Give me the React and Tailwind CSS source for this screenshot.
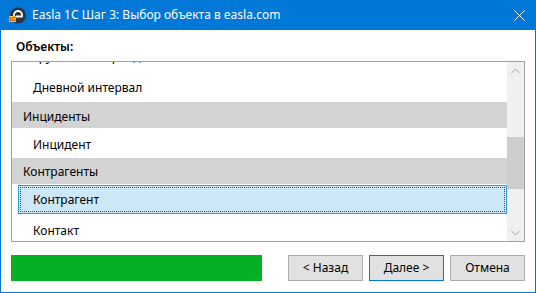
export default function App() {
  const font = "font-['Segoe_UI','Noto_Sans',sans-serif]";

  return (
    <div className={`w-[536px] h-[293px] flex flex-col bg-white text-[12px] text-black ${font}`}>
      {/* title bar */}
      <div className="h-[30px] bg-[#0078d7] flex items-center pl-[9px] pr-[11px] text-white">
        <svg width="17" height="17" viewBox="0 0 17 17">
          <circle cx="9" cy="8.5" r="8" fill="#2b3340" />
          <path d="M5 9.5 A4.2 4.2 0 1 1 13 9.5 L7 9.5" fill="none" stroke="#fff" strokeWidth="1.8" />
          <rect x="0" y="9" width="7" height="6" fill="#f5c518" />
          <text x="3.5" y="13.8" fontSize="5.5" fontWeight="700" fill="#e0301e" textAnchor="middle" fontFamily="Liberation Sans, sans-serif">1С</text>
        </svg>
        <span className="ml-[6px] leading-none">Easla 1C Шаг 3: Выбор объекта в easla.com</span>
        <svg className="ml-auto" width="11" height="11" viewBox="0 0 11 11">
          <path d="M0.5 0.5 L10.5 10.5 M10.5 0.5 L0.5 10.5" stroke="#fff" strokeWidth="1" />
        </svg>
      </div>

      {/* body */}
      <div className="flex-1 flex flex-col border-x border-b border-[#0078d7] px-[10px]">
        <div className="pt-[10px] h-[24px] leading-[14px] pl-[5px] font-semibold">Объекты:</div>
        <div className="mt-[7px] h-[181px] border border-[#a0a0a0] flex">
          <div className="flex-1 overflow-hidden flex flex-col">
            <div className="h-[10px] overflow-hidden shrink-0">
              <div className="h-[30px] -mt-[21px] ml-[6px] pl-[15px] pt-[2px] flex items-center">Групповой период</div>
            </div>
            <div className="h-[30px] shrink-0 ml-[6px] pl-[15px] pt-[2px] flex items-center">Дневной интервал</div>
            <div className="h-[26px] shrink-0 bg-[#d3d3d3] pl-[11px] pt-[3px] flex items-center">Инциденты</div>
            <div className="h-[30px] shrink-0 ml-[6px] pl-[15px] pt-[3px] flex items-center">Инцидент</div>
            <div className="h-[26px] shrink-0 bg-[#d3d3d3] pl-[11px] pt-[2px] flex items-center">Контрагенты</div>
            <div className="relative h-[29px] mt-px shrink-0 ml-[6px] bg-[#cce8f6] border border-[#26a0da] pl-[14px] pt-[1px] flex items-center">
              <div className="absolute inset-px border border-dotted border-[#4a4a4a]" />
              Контрагент
            </div>
            <div className="h-[30px] shrink-0 ml-[6px] pl-[15px] pt-[3px] flex items-center">Контакт</div>
          </div>
          {/* scrollbar */}
          <div className="w-[17px] bg-[#f0f0f0] flex flex-col">
            <div className="h-[17px] flex items-center justify-center">
              <svg width="9" height="6" viewBox="0 0 9 6">
                <path d="M0.5 5 L4.5 1 L8.5 5" fill="none" stroke="#a3a3a3" strokeWidth="1" />
              </svg>
            </div>
            <div className="flex-1">
              <div className="mt-[58px] h-[52px] bg-[#cdcdcd]" />
            </div>
            <div className="h-[17px] flex items-center justify-center">
              <svg width="9" height="6" viewBox="0 0 9 6">
                <path d="M0.5 1 L4.5 5 L8.5 1" fill="none" stroke="#a3a3a3" strokeWidth="1" />
              </svg>
            </div>
          </div>
        </div>

        {/* footer */}
        <div className="mt-[13px] flex items-center">
          <div className="w-[251px] h-[26px] bg-[#06b025]" />
          <div className="ml-auto flex gap-[6px]">
            <button className="w-[75px] h-[26px] bg-[#e1e1e1] border border-[#adadad] flex items-center justify-center">&lt; Назад</button>
            <button className="w-[75px] h-[26px] bg-[#e1e1e1] border border-[#0078d7] flex items-center justify-center">Далее &gt;</button>
            <button className="w-[75px] h-[26px] bg-[#e1e1e1] border border-[#adadad] flex items-center justify-center">Отмена</button>
          </div>
        </div>
      </div>
    </div>
  );
}
